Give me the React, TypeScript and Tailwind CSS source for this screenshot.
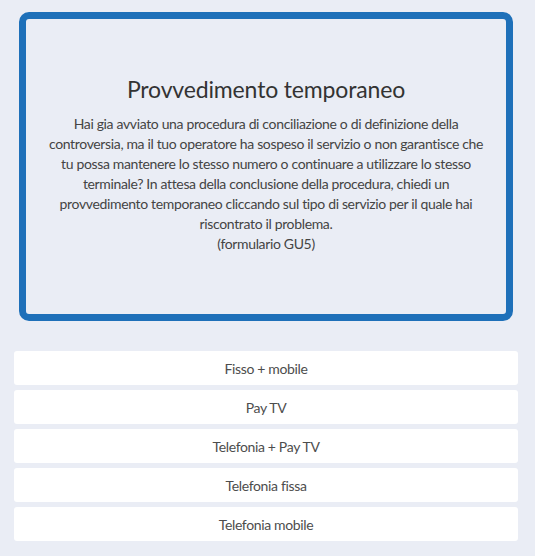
import React from 'react';

const services = ['Fisso + mobile', 'Pay TV', 'Telefonia + Pay TV', 'Telefonia fissa', 'Telefonia mobile'];

const App: React.FC = () => {
  return (
    <div className="min-h-[556px] w-[535px] bg-[#eaedf5] pt-3 font-['Lato','Noto_Sans',sans-serif] text-[#3d3d3d]">
      {/* Intro card */}
      <div className="mx-[19px] w-[494px] h-[309px] rounded-[10px] border-[7px] border-[#1e70b9] flex flex-col items-center justify-center px-[20px] pb-[5px] text-center">
        <h2 className="text-[23px] leading-[30px] tracking-[-0.15px] text-[#333] mb-[10px]">Provvedimento temporaneo</h2>
        <p className="text-[14px] leading-[20px] tracking-[-0.35px] text-[#444] whitespace-nowrap">
          Hai gia avviato una procedura di conciliazione o di definizione della
          <br />
          controversia, ma il tuo operatore ha sospeso il servizio o non garantisce che
          <br />
          tu possa mantenere lo stesso numero o continuare a utilizzare lo stesso
          <br />
          terminale? In attesa della conclusione della procedura, chiedi un
          <br />
          provvedimento temporaneo cliccando sul tipo di servizio per il quale hai
          <br />
          riscontrato il problema.
          <br />
          (formulario GU5)
        </p>
      </div>

      {/* Service list */}
      <div className="mt-[30px] mx-[14px] flex flex-col gap-[5px] pb-[15px]">
        {services.map((s) => (
          <button
            key={s}
            className="h-[34px] w-[504px] rounded-[3px] bg-white text-[14px] tracking-[-0.35px] text-[#4d4d4d] flex items-center justify-center"
          >
            {s}
          </button>
        ))}
      </div>
    </div>
  );
};

export default App;
